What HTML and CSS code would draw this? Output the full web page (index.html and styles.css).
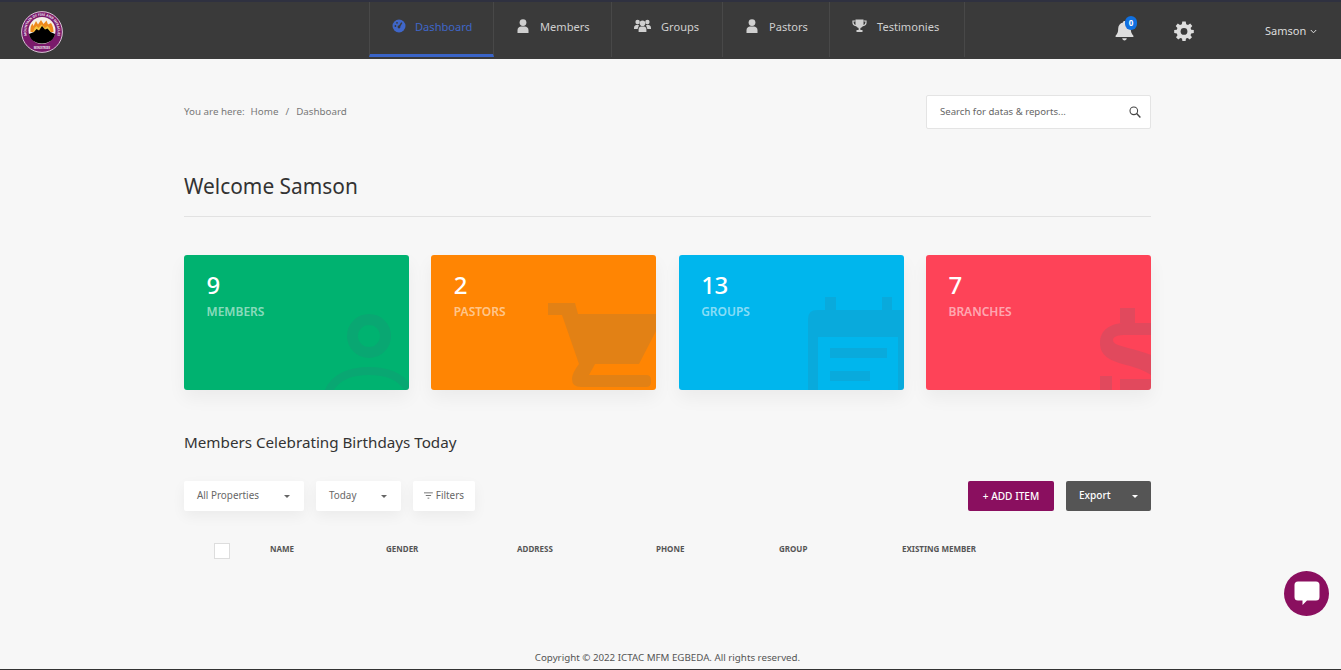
FILE: index.html
```html
<!DOCTYPE html>
<html lang="en">
<head>
    <meta charset="UTF-8">
    <meta name="viewport" content="width=device-width, initial-scale=1.0">
    <title>Dashboard</title>
    <link rel="stylesheet" href="styles.css">
</head>
<body>

    <header class="topbar">
        <a class="logo" href="#">
            <svg width="42" height="42" viewBox="0 0 42 42">
                <defs><path id="ringtext" d="M5.6 24 A15.8 15.8 0 1 1 36.4 24"/></defs>
                <circle cx="21" cy="21" r="20.4" fill="#7a1a6b" stroke="#d9c4d6" stroke-width="1"/>
                <circle cx="21" cy="19.5" r="13.5" fill="#f4efe6"/>
                <path d="M9.5 21 C9 17 10 14 11.5 12.5 L12.5 15 L15 10 L17 13.5 L20 9 L22.5 13 L25.5 9.5 L27 13.5 L30 12 C32 15 32.5 18 32.5 21 Z" fill="#ee8a1c"/>
                <path d="M12 21 L13.5 17 L15.5 15 L17.5 17 L20.5 13.5 L24 17 L26.5 15 L28.5 17 L30 21 Z" fill="#f5c63f"/>
                <path d="M8 23 L13 21 L15.5 18 L18 19.5 L21 15 L24 18.5 L26.5 17.5 L29.5 21 L34 23 C33.5 28 28 32.5 21 32.5 C14 32.5 8.5 28 8 23 Z" fill="#000"/>
                <text class="logo-ring" fill="#f1e6ef"><textPath href="#ringtext" startOffset="50%" text-anchor="middle">MOUNTAIN OF FIRE AND MIRACLES</textPath></text>
                <text class="logo-min" x="21" y="37.6" text-anchor="middle" fill="#f1e6ef">MINISTRIES</text>
            </svg>
        </a>
        <nav class="mainnav">
            <a class="navitem active" href="#">
                <svg class="navicon" width="14" height="14" viewBox="0 0 14 14"><circle cx="7" cy="7" r="6.5" fill="currentColor"/><path d="M7 8 L9.8 3.6" stroke="#3a3a3a" stroke-width="1.4"/><circle cx="7" cy="8" r="1.4" fill="#3a3a3a"/><circle cx="3.4" cy="7" r=".9" fill="#3a3a3a"/><circle cx="5" cy="3.8" r=".9" fill="#3a3a3a"/></svg>
                Dashboard
            </a>
            <a class="navitem" href="#">
                <svg class="navicon" width="14" height="14" viewBox="0 0 14 14"><circle cx="7" cy="3.6" r="3.4" fill="currentColor"/><path d="M1.5 14 V11 C1.5 8.6 3.5 7.4 5 7.4 H9 C10.5 7.4 12.5 8.6 12.5 11 V14 Z" fill="currentColor"/></svg>
                Members
            </a>
            <a class="navitem" href="#">
                <svg class="navicon" width="17" height="14" viewBox="0 0 17 14"><circle cx="3.6" cy="3" r="2.2" fill="currentColor"/><circle cx="13.4" cy="3" r="2.2" fill="currentColor"/><circle cx="8.5" cy="4.2" r="2.8" fill="currentColor"/><path d="M0 9 C0 6.6 1.6 5.8 3.6 5.8 C4.2 5.8 4.6 6 5 6.3 L3.6 10 H0 Z M17 9 C17 6.6 15.4 5.8 13.4 5.8 C12.8 5.8 12.4 6 12 6.3 L13.4 10 H17 Z" fill="currentColor"/><path d="M4.6 13 V10.4 C4.6 8.4 6 7.6 7 7.6 H10 C11 7.6 12.4 8.4 12.4 10.4 V13 Z" fill="currentColor"/></svg>
                Groups
            </a>
            <a class="navitem" href="#">
                <svg class="navicon" width="14" height="14" viewBox="0 0 14 14"><circle cx="7" cy="3.6" r="3.4" fill="currentColor"/><path d="M1.5 14 V11 C1.5 8.6 3.5 7.4 5 7.4 H9 C10.5 7.4 12.5 8.6 12.5 11 V14 Z" fill="currentColor"/></svg>
                Pastors
            </a>
            <a class="navitem" href="#">
                <svg class="navicon" width="15" height="14" viewBox="0 0 15 14"><path d="M3.5 0.5 H11.5 V5 C11.5 7.4 9.8 8.6 8.4 9 V11 H10.5 V13 H4.5 V11 H6.6 V9 C5.2 8.6 3.5 7.4 3.5 5 Z" fill="currentColor"/><path d="M3.5 2 H1 V3.6 C1 5.4 2.4 6.4 4 6.6 M11.5 2 H14 V3.6 C14 5.4 12.6 6.4 11 6.6" fill="none" stroke="currentColor" stroke-width="1.2"/></svg>
                Testimonies
            </a>
        </nav>
        <div class="tools">
            <a class="bell" href="#">
                <svg width="19" height="21" viewBox="0 0 19 21"><path d="M9.5 1 C10.4 1 11 1.6 11 2.4 C14 3 15.8 5.4 15.8 8.6 C15.8 12.4 16.6 14 18.4 15.8 V17 H0.6 V15.8 C2.4 14 3.2 12.4 3.2 8.6 C3.2 5.4 5 3 8 2.4 C8 1.6 8.6 1 9.5 1 Z" fill="#ddd"/><path d="M7.2 18.2 H11.8 C11.6 19.6 10.6 20.4 9.5 20.4 C8.4 20.4 7.4 19.6 7.2 18.2 Z" fill="#ddd"/></svg>
                <span class="badge">0</span>
            </a>
            <a class="gear" href="#">
                <svg width="20" height="20" viewBox="0 0 20 20"><path d="M8.3 0.6 H11.7 L12.2 3.2 L14 4 L16.2 2.5 L18.3 4.9 L16.6 6.9 L17.2 8.7 L19.8 9 V12 L17.2 12.4 L16.5 14.2 L18 16.3 L15.7 18.4 L13.7 16.9 L12 17.5 L11.6 20 H8.4 L8 17.5 L6.3 16.9 L4.3 18.4 L2 16.3 L3.5 14.2 L2.8 12.4 L0.2 12 V9 L2.8 8.7 L3.4 6.9 L1.7 4.9 L3.8 2.5 L6 4 L7.8 3.2 Z" fill="#ddd" fill-rule="evenodd"/><circle cx="10" cy="10.4" r="3.4" fill="#3a3a3a"/></svg>
            </a>
            <a class="usermenu" href="#">Samson
                <svg width="7" height="5" viewBox="0 0 7 5"><path d="M0.8 1 L3.5 3.8 L6.2 1" fill="none" stroke="#ddd" stroke-width="1"/></svg>
            </a>
        </div>
    </header>

    <main class="content">
        <div class="crumbrow">
            <div class="crumbs">
                <span class="crumb-label">You are here:</span>
                <a href="#">Home</a>
                <span class="crumb-sep">/</span>
                <a href="#">Dashboard</a>
            </div>
            <div class="searchbox">
                <span class="search-text">Search for datas &amp; reports...</span>
                <svg width="12" height="12" viewBox="0 0 12 12"><circle cx="4.8" cy="4.8" r="3.8" fill="none" stroke="#444" stroke-width="1.1"/><path d="M7.6 7.6 L11.4 11.4" stroke="#444" stroke-width="1.4"/></svg>
            </div>
        </div>

        <h1 class="welcome">Welcome Samson</h1>

        <section class="cards">
            <div class="card green">
                <div class="card-num">9</div>
                <div class="card-label">MEMBERS</div>
                <svg class="card-bg" viewBox="0 0 225 135"><circle cx="185" cy="81" r="16.5" fill="none" stroke-width="11"/><path d="M143 140 C150 120 170 116 185 116 C200 116 220 120 227 140" fill="none" stroke-width="8"/></svg>
            </div>
            <div class="card orange">
                <div class="card-num">2</div>
                <div class="card-label">PASTORS</div>
                <svg class="card-bg" viewBox="0 0 225 135"><path class="fill" d="M117 48 H144 L147 59 H225 V76 L208 109 H164 L158 120 H215 Q220 120 220 125 V127 Q220 132 215 132 H150 Q141 132 141 124 Q141 118 148 109 L131 60 H117 Z"/></svg>
            </div>
            <div class="card blue">
                <div class="card-num">13</div>
                <div class="card-label">GROUPS</div>
                <svg class="card-bg" viewBox="0 0 225 135"><path class="fill" d="M129 135 V64 Q129 55 138 55 H146 V42 H157 V55 H203 V42 H213 V55 H225 V135 H219 V82 H139 V135 Z"/><rect class="fill" x="151" y="93" width="57" height="10"/><rect class="fill" x="151" y="116" width="40" height="10"/></svg>
            </div>
            <div class="card red">
                <div class="card-num">7</div>
                <div class="card-label">BRANCHES</div>
                <svg class="card-bg" viewBox="0 0 225 135"><rect class="fill" x="194" y="53" width="15" height="15"/><path class="fill" d="M225 68 H200 C184 68 174 75 174 88 C174 102 186 106 200 110 C212 113 217 115 225 120 V100 C218 97 210 95 202 93 C192 90 187 89 187 85 C187 81 193 80 200 80 H225 Z"/><rect class="fill" x="194" y="124" width="31" height="11"/><rect class="fill" x="174" y="121" width="12" height="14"/></svg>
            </div>
        </section>

        <h2 class="subtitle">Members Celebrating Birthdays Today</h2>

        <div class="toolbar">
            <div class="toolbar-left">
                <button class="pill pill-props">All Properties <i class="caret"></i></button>
                <button class="pill pill-today">Today <i class="caret"></i></button>
                <button class="pill pill-filter">
                    <svg width="10" height="7" viewBox="0 0 10 7"><path d="M0 .5 H10 M2 3.5 H8 M4 6.5 H6" stroke="#666" stroke-width="1"/></svg>
                    Filters
                </button>
            </div>
            <div class="toolbar-right">
                <button class="btn btn-add">+ ADD ITEM</button>
                <button class="btn btn-export">Export <i class="caret caret-white"></i></button>
            </div>
        </div>

        <div class="tablehead">
            <div><span class="check"></span></div>
            <div>NAME</div>
            <div>GENDER</div>
            <div>ADDRESS</div>
            <div>PHONE</div>
            <div>GROUP</div>
            <div>EXISTING MEMBER</div>
        </div>

        <footer class="copyright">Copyright © 2022 ICTAC MFM EGBEDA. All rights reserved.</footer>
    </main>

    <a class="chatbtn" href="#">
        <svg width="26" height="25" viewBox="0 0 26 25"><path d="M4 0.5 H22 Q25.5 0.5 25.5 4 V16 Q25.5 19.5 22 19.5 H13 L8.5 24 V19.5 H4 Q0.5 19.5 0.5 16 V4 Q0.5 0.5 4 0.5 Z" fill="#fff"/></svg>
    </a>

</body>
</html>
```

FILE: styles.css
```css
* {
    box-sizing: border-box;
}
html, body {
    height: 100%;
}
body {
    margin: 0;
    height: 670px;
    overflow: hidden;
    background-color: #f7f7f7;
    border-bottom: 1px solid #333;
    font-family: "Noto Sans", Arial, sans-serif;
    color: #333;
}
a {
    color: inherit;
    text-decoration: none;
}
button {
    font-family: inherit;
    border: none;
    cursor: pointer;
}

.topbar {
    display: flex;
    height: 59px;
    background-color: #3a3a3a;
    border-top: 2px solid #2f3140;
}
.logo {
    display: flex;
    align-items: flex-start;
    width: 369px;
    padding: 9px 0 0 21px;
}
.logo-ring {
    font-size: 3.3px;
    font-weight: 700;
}
.logo-min {
    font-size: 2.8px;
    font-weight: 700;
}
.mainnav {
    display: flex;
    height: 55px;
}
.navitem {
    display: flex;
    align-items: center;
    gap: 10px;
    height: 55px;
    padding: 0 22px 7px;
    border-right: 1px solid #484848;
    color: #cfcfcf;
    font-size: 11.1px;
    white-space: nowrap;
}
.navitem.active {
    gap: 9px;
    width: 125px;
    padding: 0 22px 4px;
    color: #3f66c8;
    border-left: 1px solid #484848;
    border-bottom: 3px solid #3a64c8;
}
.navitem:nth-child(2) { width: 118px; }
.navitem:nth-child(3) { width: 111px; }
.navitem:nth-child(4) { width: 107px; }
.navitem:nth-child(5) { width: 135px; }
.navicon {
    flex-shrink: 0;
}
.tools {
    display: flex;
    align-items: flex-start;
    color: #ddd;
}
.bell {
    position: relative;
    margin: 18px 0 0 150px;
    height: 21px;
}
.badge {
    position: absolute;
    top: -4px;
    left: 10px;
    width: 12px;
    height: 14px;
    border-radius: 7px;
    background-color: #1070e0;
    color: #fff;
    font-size: 8px;
    font-weight: 700;
    line-height: 14px;
    text-align: center;
}
.gear {
    margin: 19px 0 0 40px;
    height: 20px;
}
.usermenu {
    display: flex;
    align-items: center;
    gap: 4px;
    margin: 21px 0 0 71px;
    font-size: 11px;
    line-height: 16px;
}

.content {
    width: 967px;
    margin-left: 184px;
}
.crumbrow {
    display: flex;
    justify-content: space-between;
    align-items: center;
    padding-top: 36px;
}
.crumbs {
    display: flex;
    gap: 6px;
    padding-bottom: 2px;
    font-size: 9.8px;
    color: #777;
}
.crumb-sep {
    margin: 0 1px;
}
.searchbox {
    display: flex;
    justify-content: space-between;
    align-items: center;
    width: 225px;
    height: 34px;
    padding: 0 9px 0 13px;
    background-color: #fff;
    border: 1px solid #e4e4e4;
    border-radius: 2px;
    font-size: 9.6px;
    color: #666;
}
.search-text {
    padding-bottom: 2px;
}
.welcome {
    margin: 43px 0 0;
    height: 45px;
    border-bottom: 1px solid #e2e2e2;
    font-size: 20.9px;
    font-weight: 400;
    line-height: 28px;
    color: #333;
}

.cards {
    display: grid;
    grid-template-columns: repeat(4, 1fr);
    gap: 22.33px;
    margin-top: 38px;
}
.card {
    position: relative;
    height: 135px;
    padding: 13px 22.5px;
    border-radius: 3px;
    overflow: hidden;
    box-shadow: 0 8px 18px rgba(0, 0, 0, .05);
    color: #fff;
}
.card.green { background-color: #00b270; }
.card.orange { background-color: #ff8503; }
.card.blue { background-color: #00b6ed; }
.card.red { background-color: #fe4358; }
.card-num {
    font-size: 24px;
    font-weight: 500;
    letter-spacing: -.5px;
    line-height: 34px;
}
.card-label {
    margin-top: 1px;
    font-size: 12px;
    font-weight: 600;
    line-height: 18px;
    color: rgba(255, 255, 255, .55);
}
.card-bg {
    position: absolute;
    left: 0;
    top: 0;
    width: 225px;
    height: 135px;
    stroke: rgba(60, 110, 130, .15);
}
.card-bg .fill {
    fill: rgba(60, 110, 130, .15);
    stroke: none;
}

.subtitle {
    margin: 41px 0 0;
    font-size: 15.2px;
    font-weight: 400;
    line-height: 22px;
    color: #333;
}
.toolbar {
    display: flex;
    justify-content: space-between;
    margin-top: 28px;
}
.toolbar-left, .toolbar-right {
    display: flex;
    gap: 12px;
}
.pill {
    display: flex;
    align-items: center;
    height: 30px;
    padding: 0 14px 2px 13px;
    background-color: #fff;
    border-radius: 2px;
    box-shadow: 0 5px 14px rgba(0, 0, 0, .05);
    font-size: 9.9px;
    color: #666;
}
.pill-props {
    justify-content: space-between;
    width: 120px;
}
.pill-today {
    justify-content: space-between;
    width: 85px;
}
.pill-filter {
    gap: 3px;
    padding: 0 11px 2px;
    width: 62px;
}
.caret {
    width: 0;
    height: 0;
    margin-top: 2px;
    border-left: 3.5px solid transparent;
    border-right: 3.5px solid transparent;
    border-top: 3.5px solid #666;
}
.caret-white {
    border-top-color: #fff;
}
.btn {
    display: flex;
    align-items: center;
    height: 30px;
    padding-bottom: 2px;
    border-radius: 2px;
    font-size: 10.1px;
    font-weight: 500;
    color: #fff;
}
.btn-add {
    justify-content: center;
    width: 86px;
    background-color: #8a0f5f;
}
.btn-export {
    justify-content: space-between;
    width: 85px;
    padding: 0 13px 2px;
    background-color: #555;
}

.tablehead {
    display: grid;
    grid-template-columns: 86px 116px 131px 139px 123px 123px auto;
    align-items: start;
    margin-top: 32px;
    height: 17px;
    font-size: 8px;
    font-weight: 700;
    line-height: 12px;
    color: #555;
}
.check {
    display: block;
    width: 16px;
    height: 16px;
    margin-left: 30px;
    background-color: #fff;
    border: 1px solid #ddd;
}
.copyright {
    margin-top: 91px;
    text-align: center;
    font-size: 9.75px;
    line-height: 14px;
    color: #555;
}
.chatbtn {
    position: fixed;
    left: 1284px;
    top: 571px;
    display: flex;
    align-items: center;
    justify-content: center;
    width: 45px;
    height: 45px;
    border-radius: 50%;
    background-color: #8a0f5f;
}
```
